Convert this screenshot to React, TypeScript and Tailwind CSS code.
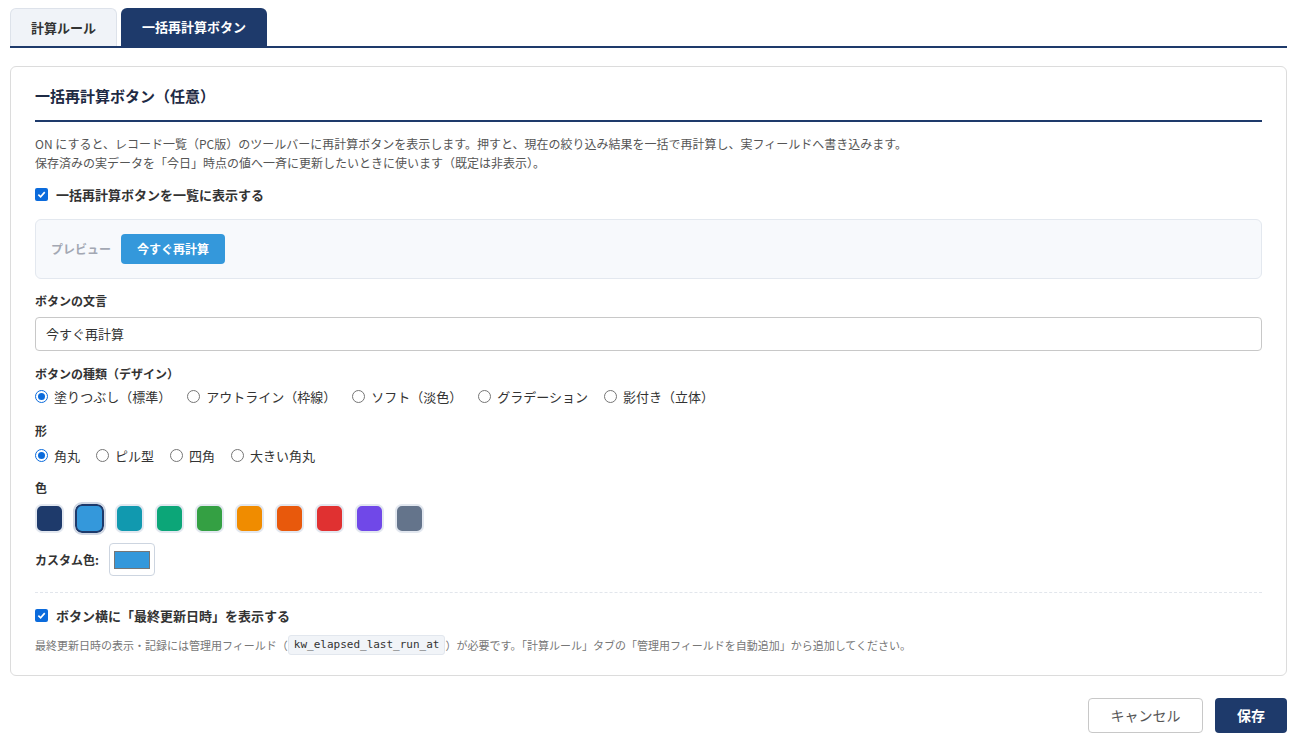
import React, { useState } from 'react'

const NAVY = '#1e3a6b'

const swatches = [
  '#1e3a6b',
  '#3498db',
  '#1199af',
  '#0ca678',
  '#34a043',
  '#f08c00',
  '#e8590c',
  '#e03131',
  '#7048e8',
  '#64748b',
]

const designs = ['塗りつぶし（標準）', 'アウトライン（枠線）', 'ソフト（淡色）', 'グラデーション', '影付き（立体）']
const shapes = ['角丸', 'ピル型', '四角', '大きい角丸']

function Radio({ checked, label }: { checked: boolean; label: string }) {
  return (
    <label className="flex items-center gap-[6px] text-[13px] text-[#333]">
      <span
        className={
          checked
            ? 'flex h-[13px] w-[13px] items-center justify-center rounded-full border border-[#0b6bdc] bg-white'
            : 'h-[13px] w-[13px] rounded-full border border-[#767676] bg-white'
        }
      >
        {checked && <span className="h-[7px] w-[7px] rounded-full bg-[#0b6bdc]" />}
      </span>
      {label}
    </label>
  )
}

function Check({ label }: { label: string }) {
  return (
    <label className="flex items-center gap-[8px] text-[13px] font-bold text-[#333]">
      <span className="flex h-[13px] w-[13px] items-center justify-center rounded-[2px] bg-[#0b6bdc]">
        <svg width="9" height="9" viewBox="0 0 10 10">
          <path d="M1.5 5.2 L4 7.6 L8.6 2.4" fill="none" stroke="white" strokeWidth="1.8" />
        </svg>
      </span>
      {label}
    </label>
  )
}

export default function App() {
  const [color] = useState(1)
  return (
    <div className="min-h-screen bg-white px-[10px] pt-[8px] font-['Noto_Sans_CJK_JP','Noto_Sans',sans-serif] text-[#333]">
      <div className="flex gap-[4px] border-b-2 border-[#1e3a6b]">
        <div className="flex h-[38px] w-[107px] items-center justify-center rounded-t-[6px] border border-b-0 border-[#dde2ea] bg-[#f0f3f8] text-[13px] font-bold text-[#333]">
          計算ルール
        </div>
        <div className="flex h-[38px] w-[146px] items-center justify-center rounded-t-[6px] bg-[#1e3a6b] text-[13px] font-bold text-white">
          一括再計算ボタン
        </div>
      </div>

      <div className="mt-[18px] rounded-[6px] border border-[#dcdcdc] px-[24px] pb-[20px] pt-[18px]">
        <h2 className="border-b-2 border-[#1e3a6b] pb-[12px] text-[15px] font-bold text-[#1e2a44]">
          一括再計算ボタン（任意）
        </h2>
        <p className="mt-[12px] text-[12px] leading-[19px] text-[#555]">
          ON にすると、レコード一覧（PC版）のツールバーに再計算ボタンを表示します。押すと、現在の絞り込み結果を一括で再計算し、実フィールドへ書き込みます。
          <br />
          保存済みの実データを「今日」時点の値へ一斉に更新したいときに使います（既定は非表示）。
        </p>
        <div className="mt-[13px]">
          <Check label="一括再計算ボタンを一覧に表示する" />
        </div>

        <div className="mt-[15px] flex h-[60px] items-center gap-[10px] rounded-[6px] border border-[#e3e8ef] bg-[#f7f9fc] px-[15px]">
          <span className="text-[12px] font-bold text-[#a3a8b3]">プレビュー</span>
          <button className="h-[30px] rounded-[4px] bg-[#3498db] px-[16px] text-[12px] font-bold text-white">
            今すぐ再計算
          </button>
        </div>

        <div className="mt-[13px] text-[12px] font-bold text-[#333]">ボタンの文言</div>
        <div className="mt-[7px] flex h-[34px] items-center rounded-[4px] border border-[#c8c8c8] px-[10px] text-[13px] text-[#333]">
          今すぐ再計算
        </div>

        <div className="mt-[14px] text-[12px] font-bold text-[#333]">ボタンの種類（デザイン）</div>
        <div className="mt-[4px] flex gap-[16px]">
          {designs.map((d, i) => (
            <Radio key={d} checked={i === 0} label={d} />
          ))}
        </div>

        <div className="mt-[15px] text-[12px] font-bold text-[#333]">形</div>
        <div className="mt-[6px] flex gap-[16px]">
          {shapes.map((s, i) => (
            <Radio key={s} checked={i === 0} label={s} />
          ))}
        </div>

        <div className="mt-[14px] text-[12px] font-bold text-[#333]">色</div>
        <div className="mt-[7px] flex gap-[11px]">
          {swatches.map((c, i) => (
            <span
              key={c}
              className={
                i === color
                  ? 'h-[29px] w-[29px] rounded-[7px] border-2 border-[#1e3a6b] outline-2 outline-[#cfd6e2]'
                  : 'h-[29px] w-[29px] rounded-[7px] border-2 border-[#e2e7ef]'
              }
              style={{ backgroundColor: c }}
            />
          ))}
        </div>

        <div className="mt-[10px] flex items-center gap-[10px]">
          <span className="text-[12px] font-bold text-[#333]">カスタム色:</span>
          <span className="flex h-[33px] w-[46px] items-center justify-center rounded-[4px] border border-[#cdd5e0] bg-white">
            <span className="h-[18px] w-[36px] border border-[#767676] bg-[#3498db]" />
          </span>
        </div>

        <div className="mt-[16px] border-t border-dashed border-[#e2e6ec]" />

        <div className="mt-[13px]">
          <Check label="ボタン横に「最終更新日時」を表示する" />
        </div>
        <p className="mt-[9px] flex items-center text-[11px] text-[#777]">
          最終更新日時の表示・記録には管理用フィールド（
          <code className="rounded-[3px] border border-[#e2e7ee] bg-[#f1f4f8] px-[5px] py-[1px] font-['DejaVu_Sans_Mono',monospace] text-[11px] text-[#333]">
            kw_elapsed_last_run_at
          </code>
          ）が必要です。「計算ルール」タブの「管理用フィールドを自動追加」から追加してください。
        </p>
      </div>

      <div className="mt-[22px] flex justify-end gap-[12px]">
        <button className="h-[35px] w-[115px] rounded-[4px] border border-[#c8c8c8] bg-white text-[14px] text-[#555]">
          キャンセル
        </button>
        <button className="h-[35px] w-[72px] rounded-[4px] text-[14px] font-bold text-white" style={{ backgroundColor: NAVY }}>
          保存
        </button>
      </div>
    </div>
  )
}
